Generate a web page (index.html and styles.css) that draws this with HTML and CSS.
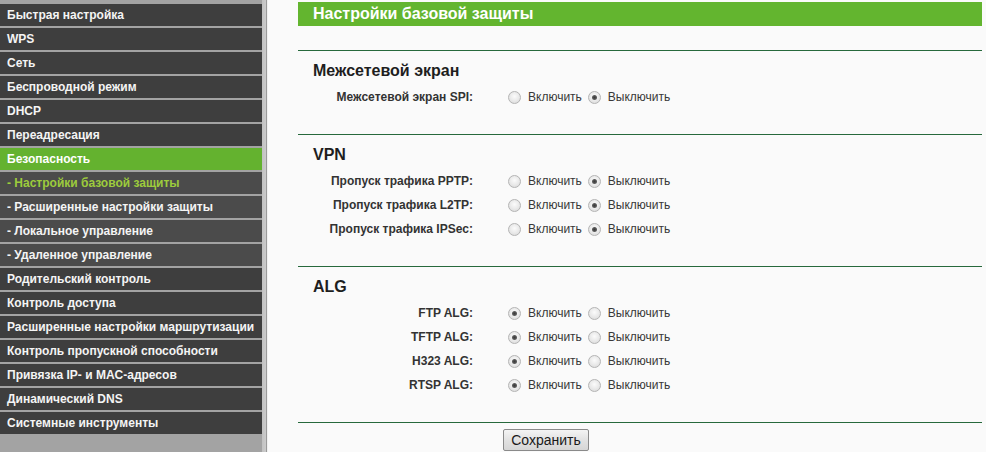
FILE: index.html
```html
<!DOCTYPE html>
<html lang="ru">
<head>
<meta charset="utf-8">
<title>Настройки базовой защиты</title>
<link rel="stylesheet" href="styles.css">
</head>
<body>
<div class="page">
  <nav class="sidebar">
    <a class="item">Быстрая настройка</a>
    <a class="item">WPS</a>
    <a class="item">Сеть</a>
    <a class="item">Беспроводной режим</a>
    <a class="item">DHCP</a>
    <a class="item">Переадресация</a>
    <a class="item active">Безопасность</a>
    <a class="item sub current">- Настройки базовой защиты</a>
    <a class="item sub">- Расширенные настройки защиты</a>
    <a class="item sub">- Локальное управление</a>
    <a class="item sub">- Удаленное управление</a>
    <a class="item">Родительский контроль</a>
    <a class="item">Контроль доступа</a>
    <a class="item">Расширенные настройки маршрутизации</a>
    <a class="item">Контроль пропускной способности</a>
    <a class="item">Привязка IP- и MAC-адресов</a>
    <a class="item">Динамический DNS</a>
    <a class="item">Системные инструменты</a>
  </nav>
  <div class="strip"></div>
  <main class="content">
    <div class="titlebar">Настройки базовой защиты</div>
    <div class="rule"></div>

    <section class="group">
      <h2 class="group-title">Межсетевой экран</h2>
      <div class="row">
        <span class="label">Межсетевой экран SPI:</span>
        <span class="opts"><span class="radio"></span><span class="opt">Включить</span><span class="radio on"></span><span class="opt">Выключить</span></span>
      </div>
    </section>
    <div class="rule"></div>

    <section class="group">
      <h2 class="group-title">VPN</h2>
      <div class="row">
        <span class="label">Пропуск трафика PPTP:</span>
        <span class="opts"><span class="radio"></span><span class="opt">Включить</span><span class="radio on"></span><span class="opt">Выключить</span></span>
      </div>
      <div class="row">
        <span class="label">Пропуск трафика L2TP:</span>
        <span class="opts"><span class="radio"></span><span class="opt">Включить</span><span class="radio on"></span><span class="opt">Выключить</span></span>
      </div>
      <div class="row">
        <span class="label">Пропуск трафика IPSec:</span>
        <span class="opts"><span class="radio"></span><span class="opt">Включить</span><span class="radio on"></span><span class="opt">Выключить</span></span>
      </div>
    </section>
    <div class="rule"></div>

    <section class="group">
      <h2 class="group-title">ALG</h2>
      <div class="row">
        <span class="label">FTP ALG:</span>
        <span class="opts"><span class="radio on"></span><span class="opt">Включить</span><span class="radio"></span><span class="opt">Выключить</span></span>
      </div>
      <div class="row">
        <span class="label">TFTP ALG:</span>
        <span class="opts"><span class="radio on"></span><span class="opt">Включить</span><span class="radio"></span><span class="opt">Выключить</span></span>
      </div>
      <div class="row">
        <span class="label">H323 ALG:</span>
        <span class="opts"><span class="radio on"></span><span class="opt">Включить</span><span class="radio"></span><span class="opt">Выключить</span></span>
      </div>
      <div class="row">
        <span class="label">RTSP ALG:</span>
        <span class="opts"><span class="radio on"></span><span class="opt">Включить</span><span class="radio"></span><span class="opt">Выключить</span></span>
      </div>
    </section>
    <div class="rule"></div>

    <div class="actions">
      <button class="btn" type="button">Сохранить</button>
    </div>
  </main>
</div>
</body>
</html>
```

FILE: styles.css
```css
html, body {
  margin: 0;
  padding: 0;
  height: 100%;
  overflow: hidden;
  background: #fafafa;
  font-family: "Liberation Sans", Arial, sans-serif;
}

.page {
  display: flex;
  height: 452px;
}

.sidebar {
  width: 262px;
  flex: 0 0 262px;
  background: #a3a3a3;
  padding-top: 4px;
  display: flex;
  flex-direction: column;
  gap: 2px;
  box-sizing: border-box;
}

.item {
  display: block;
  height: 22px;
  line-height: 22px;
  padding-left: 7px;
  background: #3e3e3e;
  color: #f4f4f4;
  font-size: 12px;
  font-weight: bold;
  white-space: nowrap;
}

.item.sub {
  background: #4b4b4b;
}

.item.active {
  background: #64b22f;
  color: #ffffff;
}

.item.current {
  color: #9dcc3c;
}

.strip {
  flex: 0 0 6px;
  background: linear-gradient(to right, #c2c2c2 0, #cbcbcb 4px, #9a9a9a 4px, #9a9a9a 5px, #f0f0f0 5px);
}

.content {
  flex: 1;
  padding: 2px 4px 0 30px;
}

.titlebar {
  height: 24px;
  line-height: 24px;
  background: #63b52f;
  color: #ffffff;
  font-size: 16px;
  font-weight: bold;
  padding-left: 15px;
}

.rule {
  margin-top: 24px;
  height: 0;
  border-top: 1px solid #27693c;
}

.group + .rule {
  margin-top: 0;
}

.group {
  padding: 10px 0 25px 0;
}

.group-title {
  margin: 0 0 4px 0;
  padding-left: 15px;
  height: 20px;
  line-height: 20px;
  font-size: 16px;
  font-weight: bold;
  color: #1e1e1e;
}

.row {
  display: grid;
  grid-template-columns: 175px auto;
  column-gap: 30px;
  height: 24px;
  line-height: 24px;
  font-size: 12px;
  color: #333333;
}

.label {
  text-align: right;
  font-weight: bold;
}

.opts {
  display: flex;
  align-items: center;
}

.radio {
  width: 11px;
  height: 11px;
  margin: 1px 7px 0 5px;
  border: 1px solid #b4b4b4;
  border-radius: 50%;
  background: radial-gradient(circle at 50% 40%, #fbfbfb 0, #ececec 45%, #d6d6d6 100%);
  position: relative;
  flex: 0 0 auto;
}

.radio.on::after {
  content: "";
  position: absolute;
  left: 3px;
  top: 3px;
  width: 5px;
  height: 5px;
  border-radius: 50%;
  background: radial-gradient(circle, #3a3a3a 0, #5a5a5a 60%, #8a8a8a 100%);
}

.opt {
  margin-right: 1px;
  color: #383838;
}

.actions {
  padding: 6px 0 0 205px;
}

.btn {
  width: 86px;
  height: 22px;
  padding: 0;
  border: 1px solid #8a8a8a;
  border-radius: 2px;
  background: linear-gradient(#f4f4f4, #e2e2e2 50%, #d6d6d6);
  font-family: "Liberation Sans", Arial, sans-serif;
  font-size: 14px;
  color: #1a1a1a;
  line-height: 20px;
}
```
